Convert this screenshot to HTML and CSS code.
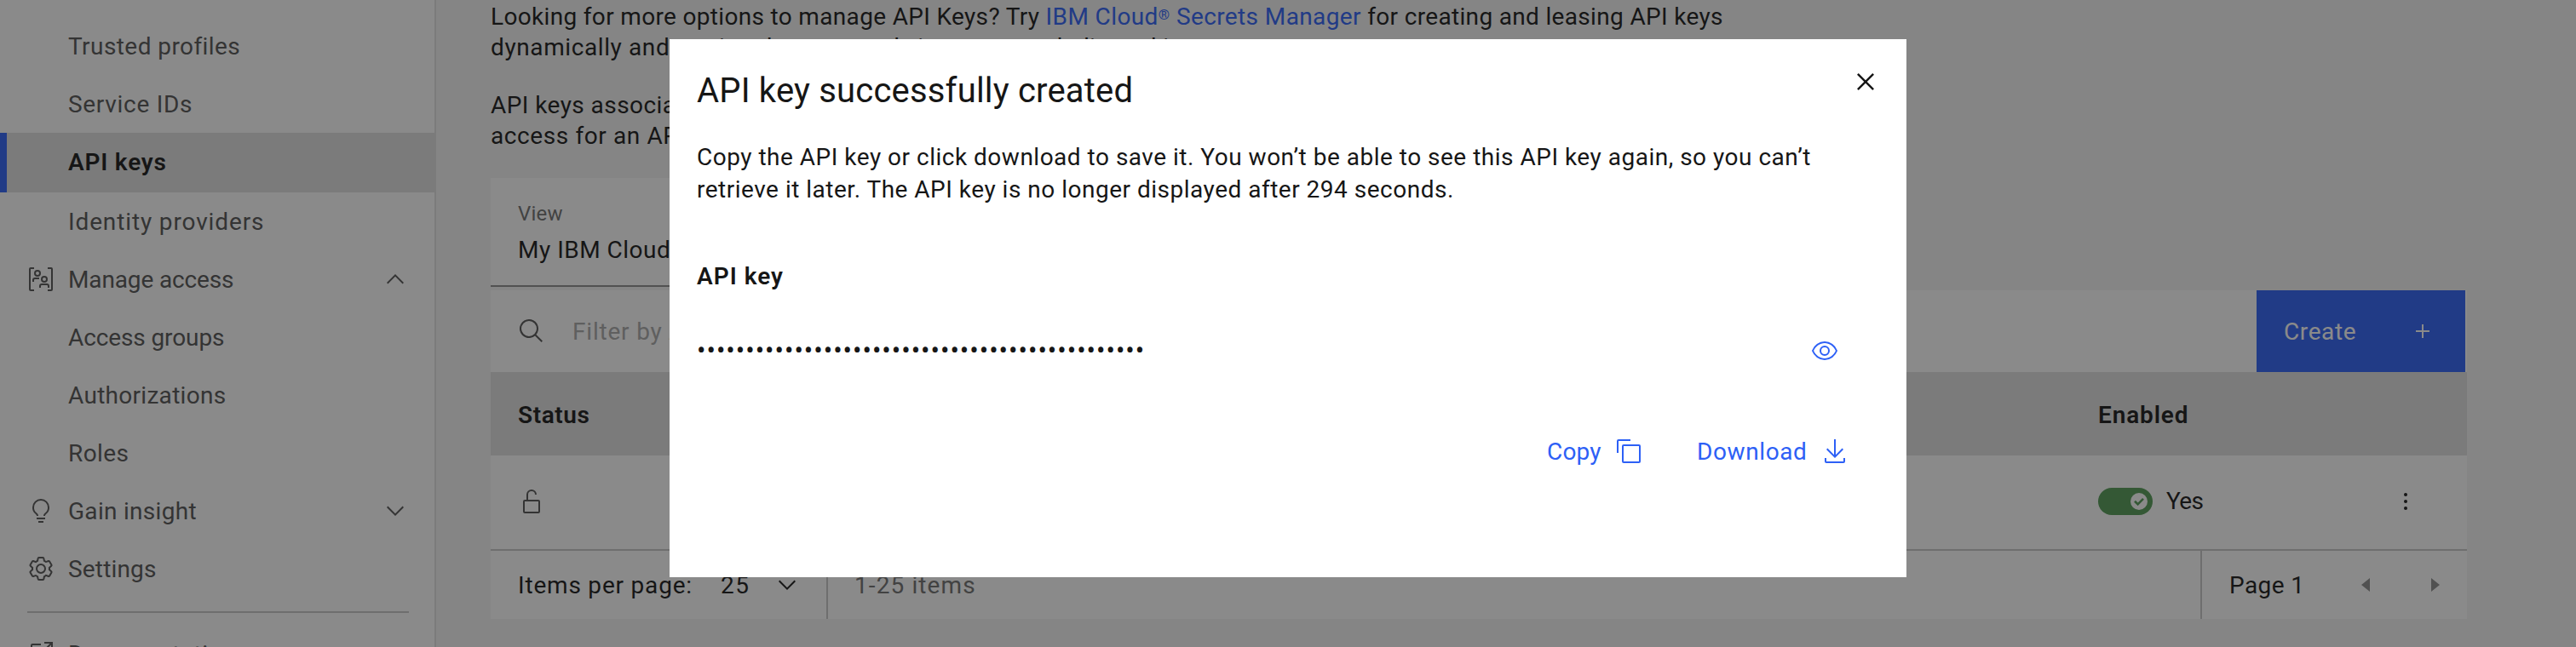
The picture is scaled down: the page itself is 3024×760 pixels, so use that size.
FILE: index.html
```html
<!DOCTYPE html>
<html lang="en">
<head>
<meta charset="utf-8">
<title>API keys - IBM Cloud</title>
<link rel="stylesheet" href="styles.css">
</head>
<body>
<div class="app">
  <nav class="sidebar">
    <a class="nav-item first"><span class="nav-label t43">Trusted profiles</span></a>
    <a class="nav-item"><span class="nav-label t70">Service IDs</span></a>
    <a class="nav-item active"><span class="nav-label t79">API keys</span></a>
    <a class="nav-item"><span class="nav-label t87">Identity providers</span></a>
    <a class="nav-item">
      <svg class="icon" viewBox="0 0 32 32"><path d="M8 30H4a2 2 0 0 1-2-2V4a2 2 0 0 1 2-2h4v2H4v24h4zM28 30h-4v-2h4V4h-4V2h4a2 2 0 0 1 2 2v24a2 2 0 0 1-2 2zM8 19H6v-2a3 3 0 0 1 3-3h5v2H9a1 1 0 0 0-1 1zM26 26h-2v-2a1 1 0 0 0-1-1h-6a1 1 0 0 0-1 1v2h-2v-2a3 3 0 0 1 3-3h6a3 3 0 0 1 3 3z"/><circle class="ring" cx="12" cy="9" r="3"/><circle class="ring" cx="20" cy="16" r="3"/></svg>
      <span class="nav-label tm14">Manage access</span>
      <svg class="icon chev" viewBox="0 0 32 32"><path d="M16 10L26 20 24.6 21.4 16 12.8 7.4 21.4 6 20z"/></svg>
    </a>
    <a class="nav-item"><span class="nav-label tm11">Access groups</span></a>
    <a class="nav-item"><span class="nav-label t29">Authorizations</span></a>
    <a class="nav-item"><span class="nav-label t43">Roles</span></a>
    <a class="nav-item">
      <svg class="icon" viewBox="0 0 32 32"><path d="M11 24H21V26H11zM13 28H19V30H13zM16 2A10 10 0 0 0 6 12a9.19 9.19 0 0 0 3.46 7.62c1 .93 1.54 1.46 1.54 2.38h2c0-1.84-1.11-2.87-2.19-3.86A7.2 7.2 0 0 1 8 12a8 8 0 0 1 16 0 7.2 7.2 0 0 1-2.82 6.14c-1.07 1-2.18 2-2.18 3.86h2c0-.92.53-1.45 1.54-2.39A9.18 9.18 0 0 0 26 12 10 10 0 0 0 16 2z"/></svg>
      <span class="nav-label t29">Gain insight</span>
      <svg class="icon chev" viewBox="0 0 32 32"><path d="M16 22L6 12 7.4 10.6 16 19.2 24.6 10.6 26 12z"/></svg>
    </a>
    <a class="nav-item">
      <svg class="icon" viewBox="0 0 32 32"><path d="M27,16.76c0-.25,0-.5,0-.76s0-.51,0-.77l1.92-1.68A2,2,0,0,0,29.3,11L26.94,7a2,2,0,0,0-1.73-1,2,2,0,0,0-.64.1l-2.43.82a11.35,11.35,0,0,0-1.31-.75l-.51-2.52a2,2,0,0,0-2-1.61H13.64a2,2,0,0,0-2,1.61l-.51,2.52a11.48,11.48,0,0,0-1.32.75L7.43,6.06A2,2,0,0,0,6.79,6,2,2,0,0,0,5.06,7L2.7,11a2,2,0,0,0,.41,2.51L5,15.24c0,.25,0,.5,0,.76s0,.51,0,.77L3.11,18.45A2,2,0,0,0,2.7,21L5.06,25a2,2,0,0,0,1.73,1,2,2,0,0,0,.64-.1l2.43-.82a11.35,11.35,0,0,0,1.31.75l.51,2.52a2,2,0,0,0,2,1.61h4.72a2,2,0,0,0,2-1.61l.51-2.52a11.48,11.48,0,0,0,1.32-.75l2.42.82a2,2,0,0,0,.64.1,2,2,0,0,0,1.73-1L29.3,21a2,2,0,0,0-.41-2.51ZM25.21,24l-3.43-1.16a8.86,8.86,0,0,1-2.71,1.57L18.36,28H13.64l-.71-3.55a9.36,9.36,0,0,1-2.7-1.57L6.79,24,4.43,20l2.72-2.4a8.9,8.9,0,0,1,0-3.13L4.43,12,6.79,8l3.43,1.16a8.86,8.86,0,0,1,2.71-1.57L13.64,4h4.72l.71,3.55a9.36,9.36,0,0,1,2.7,1.57L25.21,8,27.57,12l-2.72,2.4a8.9,8.9,0,0,1,0,3.13L27.57,20Z"/><path d="M16,22a6,6,0,1,1,6-6A5.94,5.94,0,0,1,16,22Zm0-10a3.91,3.91,0,0,0-4,4,3.91,3.91,0,0,0,4,4,3.91,3.91,0,0,0,4-4A3.91,3.91,0,0,0,16,12Z"/></svg>
      <span class="nav-label t17">Settings</span>
    </a>
    <div class="nav-divider"></div>
    <a class="nav-item">
      <svg class="icon" viewBox="0 0 32 32"><path d="M26 28H6a2 2 0 0 1-2-2V6a2 2 0 0 1 2-2h10v2H6v20h20V16h2v10a2 2 0 0 1-2 2z"/><path d="M20 2v2h6.586L18 12.586 19.414 14 28 5.414V12h2V2z"/></svg>
      <span class="nav-label t43">Documentation</span>
    </a>
  </nav>

  <main class="content">
    <p class="intro"><span class="t33">Looking for more options to manage API Keys? Try </span><a class="link t39">IBM Cloud<span class="reg">®</span> Secrets Manager</a><span class="t33"> for creating and leasing API keys</span><br><span class="t60">dynamically and</span><span class="t39"> storing them securely in your own dedicated instance.</span></p>
    <p class="intro"><span class="t43">API keys associated with a user's identity have the same access as the user. To update the</span><br><span class="t60">access for an API key, assign or remove access for the user.</span></p>

    <div class="view-select">
      <div class="view-label">View</div>
      <div class="view-value">My IBM Cloud API keys</div>
    </div>

    <section class="table">
      <div class="toolbar">
        <div class="search">
          <svg class="icon" viewBox="0 0 32 32"><path d="M29 27.586l-7.552-7.552a11.018 11.018 0 1 0-1.414 1.414L27.586 29zM4 13a9 9 0 1 1 9 9A9.01 9.01 0 0 1 4 13z"/></svg>
          <span class="placeholder">Filter by API key name</span>
        </div>
        <button class="create"><span class="drop t60">Create</span><svg class="icon" viewBox="0 0 32 32"><path d="M17 15V8h-2v7H8v2h7v7h2v-7h7v-2z"/></svg></button>
      </div>
      <div class="row head">
        <div class="status t60">Status</div>
        <div class="enabled t87">Enabled</div>
      </div>
      <div class="row">
        <div class="status"><svg class="icon" viewBox="0 0 32 32"><path d="M24 14H12V8a4 4 0 0 1 8 0h2a6 6 0 0 0-12 0v6H8a2 2 0 0 0-2 2v12a2 2 0 0 0 2 2h16a2 2 0 0 0 2-2V16a2 2 0 0 0-2-2zm0 14H8V16h16z"/></svg></div>
        <div class="enabled">
          <span class="toggle"><span class="knob"><svg class="check" viewBox="0 0 12 10"><path d="M1 4.8L4.6 8.3 11 1.8"/></svg></span></span>
          <span class="yes">Yes</span>
        </div>
        <svg class="icon menu" viewBox="0 0 32 32"><circle cx="16" cy="8" r="2"/><circle cx="16" cy="16" r="2"/><circle cx="16" cy="24" r="2"/></svg>
      </div>
      <div class="pager">
        <div class="page-size"><span class="per-page drop t79">Items per page:</span><span class="size drop">25</span><svg class="icon" viewBox="0 0 32 32"><path d="M16 22L6 12 7.4 10.6 16 19.2 24.6 10.6 26 12z"/></svg></div>
        <div class="range drop">1-25 items</div>
        <div class="page-nav"><span class="page-no drop">Page 1</span><svg class="icon prev" viewBox="0 0 32 32"><path d="M20 24L10 16 20 8z"/></svg><svg class="icon next" viewBox="0 0 32 32"><path d="M12 8L22 16 12 24z"/></svg></div>
      </div>
    </section>
  </main>
</div>

<div class="overlay">
  <div class="modal">
    <header class="modal-head">
      <h2 class="modal-title">API key successfully created</h2>
      <svg class="close" viewBox="0 0 32 32"><path d="M24 9.4L22.6 8 16 14.6 9.4 8 8 9.4 14.6 16 8 22.6 9.4 24 16 17.4 22.6 24 24 22.6 17.4 16 24 9.4z"/></svg>
    </header>
    <p class="modal-text t49">Copy the API key or click download to save it. You won’t be able to see this API key again, so you can’t<br>retrieve it later. The API key is no longer displayed after 294 seconds.</p>
    <div class="key-label">API key</div>
    <div class="key-row">
      <span class="key-mask">••••••••••••••••••••••••••••••••••••••••••••••</span>
      <svg class="icon" viewBox="0 0 32 32"><path d="M30.94 15.66A16.69 16.69 0 0 0 16 5 16.69 16.69 0 0 0 1.06 15.66a1 1 0 0 0 0 .68A16.69 16.69 0 0 0 16 27a16.69 16.69 0 0 0 14.94-10.66 1 1 0 0 0 0-.68zM16 25c-5.3 0-10.9-3.93-12.93-9C5.1 10.93 10.7 7 16 7s10.9 3.93 12.93 9C26.9 21.07 21.3 25 16 25z"/><path d="M16 10a6 6 0 1 0 6 6 6 6 0 0 0-6-6zm0 10a4 4 0 1 1 4-4 4 4 0 0 1-4 4z"/></svg>
    </div>
    <div class="actions">
      <a class="action copy"><span class="drop t17">Copy</span><svg class="icon" viewBox="0 0 32 32"><path d="M28 10v18H10V10h18m0-2H10a2 2 0 0 0-2 2v18a2 2 0 0 0 2 2h18a2 2 0 0 0 2-2V10a2 2 0 0 0-2-2z"/><path d="M4 18H2V4a2 2 0 0 1 2-2h14v2H4z"/></svg></a>
      <a class="action download"><span class="drop t60">Download</span><svg class="icon" viewBox="0 0 32 32"><path d="M26 24v4H6v-4H4v4a2 2 0 0 0 2 2h20a2 2 0 0 0 2-2v-4z"/><path d="M26 14l-1.41-1.41L17 20.17V2h-2v18.17l-7.59-7.58L6 14l10 10z"/></svg></a>
    </div>
  </div>
</div>
</body>
</html>
```
FILE: styles.css
```css
* { box-sizing: border-box; }

body {
  margin: 0;
  width: 3024px;
  height: 760px;
  overflow: hidden;
  background: #f4f4f4;
  color: #161616;
  font: 400 28px/36px Roboto, "Liberation Sans", sans-serif;
}

p, h2 { margin: 0; }

.icon { width: 32px; height: 32px; flex: none; display: block; fill: currentColor; }
.ring { fill: none; stroke: currentColor; stroke-width: 2; }

.drop { padding-top: 2px; }

/* Tracking steps */
.tm14 { letter-spacing: -.14px; }
.tm11 { letter-spacing: -.11px; }
.t17 { letter-spacing: .17px; }
.t29 { letter-spacing: .29px; }
.t33 { letter-spacing: .33px; }
.t39 { letter-spacing: .39px; }
.t43 { letter-spacing: .43px; }
.t49 { letter-spacing: .5px; }
.t60 { letter-spacing: .6px; }
.t70 { letter-spacing: .7px; }
.t79 { letter-spacing: .8px; }
.t87 { letter-spacing: .87px; }

.app { display: flex; height: 760px; overflow: hidden; }

/* Sidebar */
.sidebar {
  flex: none;
  width: 512px;
  height: 900px;
  padding-top: 20px;
  background: #fff;
  border-right: 2px solid #e0e0e0;
  color: #525252;
}
.nav-item { display: flex; align-items: center; height: 68px; padding-left: 32px; }
.nav-item .nav-label { margin-left: 48px; padding-top: 2px; white-space: nowrap; }
.nav-item .icon + .nav-label { margin-left: 16px; }
.nav-item.active { height: 70px; background: #e0e0e0; color: #161616; font-weight: 600; padding-left: 24px; border-left: 8px solid #2d60f6; }
.nav-item.active .nav-label { padding-top: 0; }
.chev { margin-left: auto; margin-right: 30px; }
.nav-divider { height: 2px; margin: 16px 30px 14px 32px; background: #c6c6c6; }

/* Page content */
.content { flex: none; width: 2384px; padding: 2px 0 0 64px; }
.intro { margin-bottom: 32px; white-space: nowrap; }
.link { color: #2d60f6; }
.reg { font-size: 17px; line-height: 0; vertical-align: 6px; }

.view-select {
  width: 640px;
  height: 128px;
  margin: -1px 0 4px;
  padding: 26px 32px 0;
  background: #fff;
  border-bottom: 2px solid #8d8d8d;
}
.view-label { font-size: 24px; line-height: 32px; letter-spacing: .22px; color: #6f6f6f; }
.view-value { margin-top: 7px; line-height: 40px; letter-spacing: .5px; }

.toolbar { display: flex; height: 96px; background: #fff; }
.search { flex: 1; display: flex; align-items: center; gap: 32px; padding-left: 32px; color: #525252; }
.placeholder { padding-top: 2px; color: #a8a8a8; letter-spacing: .8px; }
.create {
  display: flex;
  align-items: center;
  justify-content: space-between;
  width: 245px;
  margin-right: 2px;
  padding: 0 34px 0 32px;
  border: 0;
  background: #2d60f6;
  color: #fff;
  font: inherit;
}

.row { display: grid; grid-template-columns: 1887px 345px 1fr; align-items: center; height: 110px; padding-bottom: 3px; background: #fff; }
.row.head { height: 98px; padding: 3px 0 0; background: #e0e0e0; font-weight: 600; }
.status { padding-left: 32px; }
.status .icon { color: #525252; }
.enabled { display: flex; align-items: center; gap: 16px; }
.toggle { display: flex; align-items: center; justify-content: flex-end; width: 64px; height: 32px; padding-right: 6px; border-radius: 16px; background: #529b55; }
.knob { display: flex; align-items: center; justify-content: center; width: 20px; height: 20px; border-radius: 50%; background: #fff; }
.check { width: 12px; height: 10px; fill: none; stroke: #529b55; stroke-width: 2.6; }
.yes { letter-spacing: -.64px; }
.menu { color: #161616; }

.pager { display: flex; height: 82px; background: #fff; border-top: 2px solid #c6c6c6; }
.page-size { display: flex; align-items: center; width: 396px; padding-left: 32px; border-right: 2px solid #c6c6c6; }
.per-page { width: 238px; white-space: nowrap; }
.size { width: 62px; letter-spacing: 1.5px; }
.range { display: flex; align-items: center; padding-left: 31px; color: #6f6f6f; letter-spacing: 1.1px; }
.page-nav { display: flex; align-items: center; width: 313px; margin-left: auto; padding-left: 32px; border-left: 2px solid #c6c6c6; }
.page-no { width: 145px; letter-spacing: .4px; }
.page-nav .icon { color: #8d8d8d; }
.page-nav .next { margin-left: 48px; }

/* Modal */
.overlay { position: fixed; inset: 0; background: rgba(22, 22, 22, .5); }
.modal { width: 1452px; height: 632px; margin: 46px 0 0 786px; padding: 33px 28px 0 32px; background: #fff; }
.modal-head { display: flex; justify-content: space-between; align-items: flex-start; }
.modal-title { font-size: 40px; font-weight: 400; line-height: 56px; letter-spacing: .18px; }
.close { width: 40px; height: 40px; margin-top: -3px; fill: #161616; }
.modal-text { margin-top: 31px; line-height: 38px; white-space: nowrap; }
.key-label { margin-top: 65px; font-weight: 600; letter-spacing: 1px; }
.key-row { display: flex; align-items: center; justify-content: space-between; height: 48px; margin-top: 45px; padding-right: 52px; color: #2d60f6; }
.key-mask { color: #161616; font-size: 31px; letter-spacing: .98px; }
.actions { display: flex; justify-content: flex-end; gap: 64px; margin-top: 70px; padding-right: 40px; color: #2d60f6; }
.action { display: flex; align-items: center; justify-content: space-between; height: 48px; }
.copy { width: 112px; }
.download { width: 178px; }
```
